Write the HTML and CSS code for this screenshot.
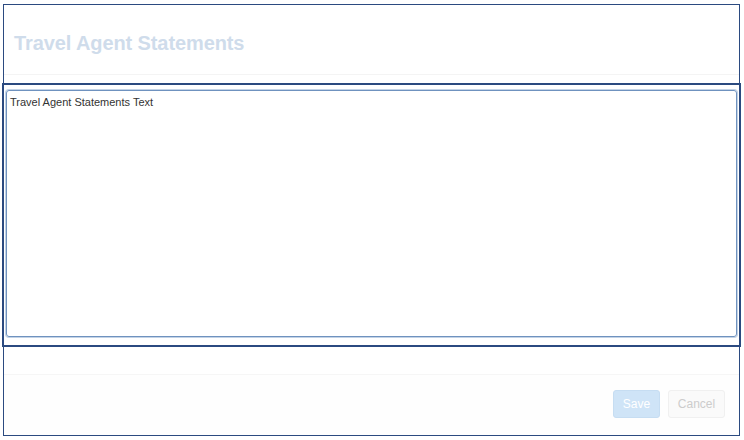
FILE: index.html
```html
<!DOCTYPE html>
<html>
<head>
<meta charset="utf-8">
<link rel="stylesheet" href="styles.css">
</head>
<body>
<div class="modal">
  <div class="modal-header">
    <h1 class="modal-title">Travel Agent Statements</h1>
  </div>
  <div class="modal-body">
    <div class="text-area">Travel Agent Statements Text</div>
  </div>
  <div class="modal-footer">
    <button class="btn btn-save">Save</button>
    <button class="btn btn-cancel">Cancel</button>
  </div>
</div>
</body>
</html>
```

FILE: styles.css
```css
html, body {
  margin: 0;
  padding: 0;
  background: #ffffff;
}
body {
  font-family: "Liberation Sans", Arial, sans-serif;
}
.modal {
  margin: 4px 0 0 3px;
  width: 735px;
  height: 430px;
  border: 1px solid #2b4a80;
  background: #ffffff;
  display: flex;
  flex-direction: column;
}
.modal-header {
  height: 69px;
  box-sizing: content-box;
  padding: 0 10px;
  border-bottom: 1px solid #f4f4f4;
}
.modal-title {
  margin: 26px 0 0 0;
  font-size: 20px;
  line-height: 24px;
  font-weight: bold;
  color: #cfdceb;
  letter-spacing: -0.1px;
}
.modal-body {
  margin-top: 10px;
  height: 260px;
  box-sizing: border-box;
  padding: 5px 2px 8px 2px;
  outline: 2px solid #2b4a80;
  display: flex;
}
.text-area {
  flex: 1;
  border: 1px solid #6f92bf;
  box-shadow: 0 0 0 1px #c3d3e6;
  border-radius: 3px;
  padding: 4px 3px;
  font-size: 11px;
  line-height: 14px;
  color: #333333;
}
.modal-footer {
  margin-top: 29px;
  border-top: 1px solid #f6f6f6;
  flex: 1;
  display: flex;
  justify-content: flex-end;
  align-items: flex-start;
  gap: 8px;
  padding: 15px 14px 0 0;
  background: #fefefe;
}
.btn {
  height: 28px;
  border-radius: 3px;
  font-family: "Liberation Sans", Arial, sans-serif;
  font-size: 12px;
  padding: 0;
}
.btn-save {
  width: 47px;
  background: #cfe4f7;
  border: 1px solid #c6ddf2;
  color: #ffffff;
}
.btn-cancel {
  width: 57px;
  background: #fafafa;
  border: 1px solid #f0f0f0;
  color: #cccccc;
}
```
